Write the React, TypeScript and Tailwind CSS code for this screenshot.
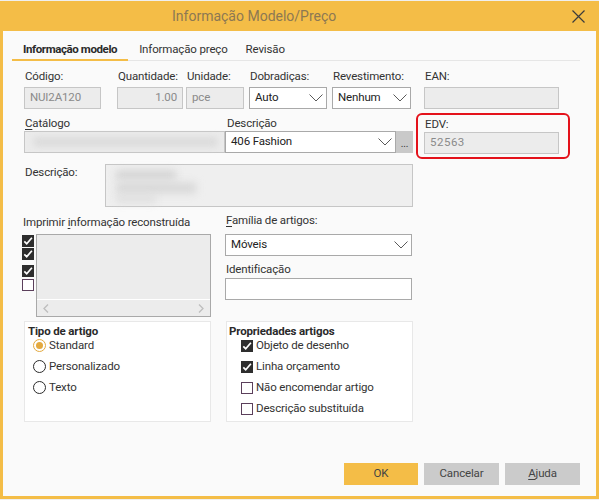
import React from 'react';

/* small drawing helpers */
const Chevron = () => (
  <svg width="14" height="8" viewBox="0 0 14 8" className="shrink-0">
    <path d="M0.5 0.5l6.5 6.5 6.5-6.5" fill="none" stroke="#5a5a5a" strokeWidth="1" />
  </svg>
);

const Check = ({ checked = false }: { checked?: boolean }) =>
  checked ? (
    <span className="flex h-[12px] w-[12px] shrink-0 items-center justify-center bg-[#2e2e2e]">
      <svg width="10" height="10" viewBox="0 0 10 10">
        <path d="M1.3 5.4l2.4 2.3L8.9 1.8" fill="none" stroke="#fff" strokeWidth="1.7" />
      </svg>
    </span>
  ) : (
    <span className="block h-[12px] w-[12px] shrink-0 border border-[#5b3f5b] bg-white" />
  );

const Radio = ({ on = false }: { on?: boolean }) =>
  on ? (
    <span className="flex h-[13px] w-[13px] shrink-0 items-center justify-center rounded-full border border-[#e3a93f] bg-white">
      <span className="h-[7px] w-[7px] rounded-full bg-[#e3a93f]" />
    </span>
  ) : (
    <span className="block h-[13px] w-[13px] shrink-0 rounded-full border border-[#2b2b2b] bg-white" />
  );

const Label = ({ children, className = '' }: { children: React.ReactNode; className?: string }) => (
  <div className={`h-[14px] whitespace-nowrap pl-px leading-[14px] text-[#333] ${className}`}>{children}</div>
);

const ReadOnly = ({ value = '', className = '' }: { value?: string; className?: string }) => (
  <div className={`flex h-[22px] items-center border border-[#c6c6c6] bg-[#ececec] px-[5px] text-[#8a8a8a] ${className}`}>
    {value}
  </div>
);

const Select = ({ value, className = '' }: { value: string; className?: string }) => (
  <div className={`flex h-[22px] items-center justify-between border border-[#a9a9a9] bg-white pl-[5px] pr-[3px] text-[#222] ${className}`}>
    <span>{value}</span>
    <Chevron />
  </div>
);

export default function App() {
  return (
    <div className="h-[500px] w-[599px] overflow-hidden bg-[#efefef] pt-px font-['Roboto',sans-serif] text-[11.5px] tracking-[-0.15px]">
      <div className="flex h-[498px] w-[599px] flex-col border-x-[3px] border-b-[3px] border-[#f4bd47] bg-[#fafafa]">
        {/* title bar */}
        <div className="-mx-[3px] flex h-[30px] shrink-0 items-center bg-[#f4bd47] pl-[172px] pr-[14px]">
          <span className="text-[14px] tracking-normal text-[#8c7853]">Informação Modelo/Preço</span>
          <svg width="13" height="13" viewBox="0 0 13 13" className="ml-auto">
            <path d="M0.5 0.5l12 12M12.5 0.5l-12 12" stroke="#3c3c3c" strokeWidth="1.2" />
          </svg>
        </div>

        {/* tabs */}
        <div className="ml-[9px] mr-[16px] mt-[10px] flex border-b border-[#e6e6e6]">
          <div className="-mb-px h-[20px] border-b-2 border-[#f4bd47] px-[11px] font-bold leading-[16px] tracking-[-0.4px] text-[#2a2a2a]">
            Informação modelo
          </div>
          <div className="h-[19px] pl-[11px] pr-[9px] leading-[16px] text-[#333]">Informação preço</div>
          <div className="h-[19px] px-[9px] leading-[16px] text-[#333]">Revisão</div>
        </div>

        <div className="flex flex-col pl-[21px]">
          {/* row 1 */}
          <div className="mt-[8px] flex">
            <div className="w-[77px]">
              <Label>Código:</Label>
              <ReadOnly value="NUI2A120" className="mt-[4px]" />
            </div>
            <div className="ml-[16px] w-[66px]">
              <Label className="pl-0">Quantidade:</Label>
              <ReadOnly value="1.00" className="mt-[4px] justify-end" />
            </div>
            <div className="ml-[3px] w-[58px]">
              <Label>Unidade:</Label>
              <ReadOnly value="pce" className="mt-[4px]" />
            </div>
            <div className="ml-[5px] w-[78px]">
              <Label>Dobradiças:</Label>
              <Select value="Auto" className="mt-[4px] border-[#4f8fd8]" />
            </div>
            <div className="ml-[5px] w-[79px]">
              <Label>Revestimento:</Label>
              <Select value="Nenhum" className="mt-[4px]" />
            </div>
            <div className="ml-[13px] w-[135px]">
              <Label>EAN:</Label>
              <ReadOnly className="mt-[4px]" />
            </div>
          </div>

          {/* row 2 */}
          <div className="mt-[4px] flex items-start">
            <div className="flex w-[389px] flex-col pt-[3px]">
              <div className="flex">
                <Label className="w-[202px]">
                  <span className="underline underline-offset-2">C</span>atálogo
                </Label>
                <Label>Descrição</Label>
              </div>
              <div className="mt-px flex h-[22px]">
                <div className="w-[201px] border border-[#c6c6c6] bg-[#ebebeb] pl-[8px] pt-[5px]">
                  <div className="h-[10px] w-[185px] rounded-sm bg-[#dcdcdc] blur-[3px]" />
                </div>
                <Select value="406 Fashion" className="w-[171px]" />
                <div className="flex w-[17px] items-end justify-center bg-[#c9c9c9] pb-[4px] text-[10px] leading-[10px] text-[#333]">
                  ...
                </div>
              </div>
            </div>
            <div className="ml-[3px] h-[46px] w-[154px] rounded-[6px] border-2 border-[#e4121b] pl-[6px] pt-[2px]">
              <Label>EDV:</Label>
              <ReadOnly value="52563" className="mt-[1px] h-[21px] w-[135px] tracking-[0.5px]" />
            </div>
          </div>

          {/* row 3 */}
          <div className="mt-[5px] flex">
            <Label className="mt-[1px] w-[81px]">Descrição:</Label>
            <div className="h-[43px] w-[308px] border border-[#c6c6c6] bg-[#efefef] pl-[10px] pt-[6px]">
              <div className="h-[8px] w-[60px] bg-[#cfcfcf] blur-[4px]" />
              <div className="mt-[4px] h-[10px] w-[80px] bg-[#d6d6d6] blur-[4px]" />
              <div className="mt-[3px] h-[6px] w-[40px] bg-[#dadada] blur-[4px]" />
            </div>
          </div>

          {/* row 4 */}
          <div className="mt-[6px] flex h-[104px]">
            <div className="-ml-[2px] w-[189px]">
              <Label className="mt-[2px] pl-[3px]">
                Imprimir <span className="underline underline-offset-2">i</span>nformação reconstruída
              </Label>
              <div className="mt-[5px] flex">
                <div className="flex w-[14px] flex-col">
                  <div className="mt-px">
                    <Check checked />
                  </div>
                  <div className="mt-px">
                    <Check checked />
                  </div>
                  <div className="mt-[5px]">
                    <Check checked />
                  </div>
                  <div className="mt-[2px]">
                    <Check />
                  </div>
                </div>
                <div className="flex h-[83px] w-[175px] flex-col border border-[#a9a9a9] bg-[#ececec]">
                  <div className="flex-1" />
                  <div className="flex h-[17px] items-center justify-between border-t border-white px-[6px]">
                    <svg width="6" height="9" viewBox="0 0 6 9">
                      <path d="M5 0.5L1 4.5 5 8.5" fill="none" stroke="#bdbdbd" strokeWidth="1.3" />
                    </svg>
                    <svg width="6" height="9" viewBox="0 0 6 9">
                      <path d="M1 0.5L5 4.5 1 8.5" fill="none" stroke="#bdbdbd" strokeWidth="1.3" />
                    </svg>
                  </div>
                </div>
              </div>
            </div>
            <div className="ml-[14px] w-[187px]">
              <Label className="pl-[2px]">
                <span className="underline underline-offset-2">F</span>amília de artigos:
              </Label>
              <Select value="Móveis" className="mt-[7px] h-[20px]" />
              <Label className="mt-[6px] pl-[2px]">Identificação</Label>
              <div className="mt-[2px] h-[22px] border border-[#a9a9a9] bg-white" />
            </div>
          </div>

          {/* row 5: groups */}
          <div className="mt-[4px] flex">
            <div className="h-[101px] w-[187px] border border-[#e8e8e8] bg-white pl-[3px] pt-[2px]">
              <div className="font-bold leading-[14px] text-[#2a2a2a]">Tipo de artigo</div>
              <div className="ml-[5px] mt-[1px] flex flex-col gap-[8px]">
                <div className="flex h-[13px] items-center gap-[3px] text-[#333]">
                  <Radio on />
                  Standard
                </div>
                <div className="flex h-[13px] items-center gap-[3px] text-[#333]">
                  <Radio />
                  Personalizado
                </div>
                <div className="flex h-[13px] items-center gap-[3px] text-[#333]">
                  <Radio />
                  Texto
                </div>
              </div>
            </div>
            <div className="ml-[15px] h-[101px] w-[187px] border border-[#e8e8e8] bg-white pl-[2px] pt-[2px]">
              <div className="font-bold leading-[14px] text-[#2a2a2a]">Propriedades artigos</div>
              <div className="ml-[12px] mt-[2px] flex flex-col gap-[9px]">
                {[
                  ['Objeto de desenho', true],
                  ['Linha orçamento', true],
                  ['Não encomendar artigo', false],
                  ['Descrição substituída', false],
                ].map(([t, c]) => (
                  <div key={t as string} className="flex h-[12px] items-center gap-[3px] text-[#333]">
                    <Check checked={c as boolean} />
                    {t as string}
                  </div>
                ))}
              </div>
            </div>
          </div>
        </div>

        {/* buttons */}
        <div className="mb-[11px] mr-[16px] mt-auto flex justify-end gap-[6px]">
          <div className="flex h-[22px] w-[74px] items-center justify-center bg-[#f4bd47] text-[#444]">OK</div>
          <div className="flex h-[22px] w-[75px] items-center justify-center bg-[#cbcbcb] text-[#444]">Cancelar</div>
          <div className="flex h-[22px] w-[75px] items-center justify-center bg-[#cbcbcb] text-[#444]">
            <span className="underline underline-offset-2">A</span>juda
          </div>
        </div>
      </div>
    </div>
  );
}
